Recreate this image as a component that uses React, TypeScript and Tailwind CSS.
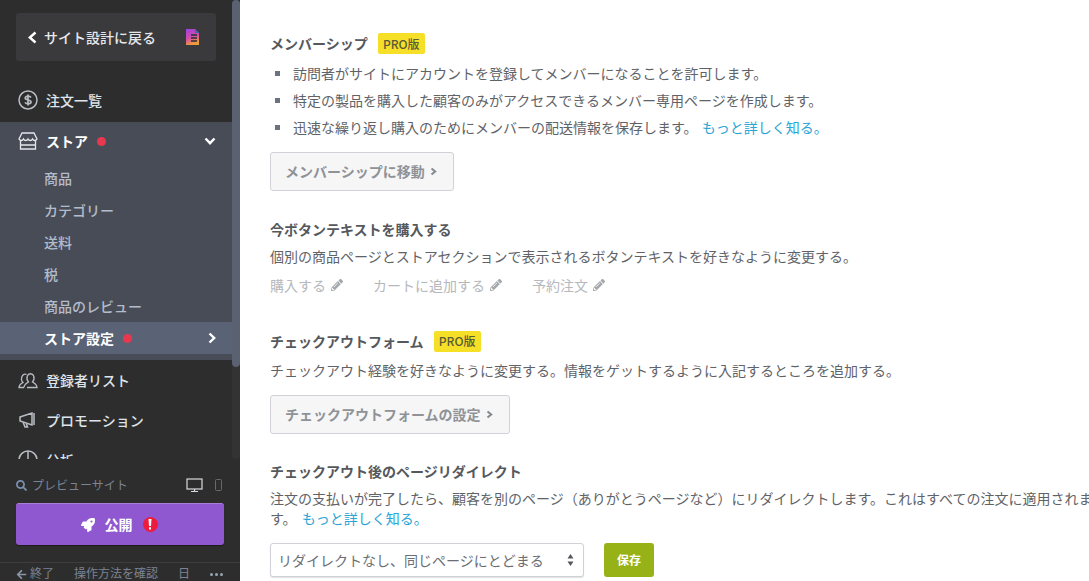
import React from "react";
import { FaPencilAlt, FaRocket, FaSearch, FaArrowLeft } from "react-icons/fa";

const font = { fontFamily: '"Noto Sans CJK JP", sans-serif' };

function Chevron({ dir, className, w, h, sw = 2.4, color = "#fff" }: { dir: "left" | "right" | "down"; className?: string; w: number; h: number; sw?: number; color?: string }) {
  const d =
    dir === "left"
      ? `M${w - 1.5} 1.5L1.8 ${h / 2}L${w - 1.5} ${h - 1.5}`
      : dir === "right"
        ? `M1.5 1.5L${w - 1.8} ${h / 2}L1.5 ${h - 1.5}`
        : `M1.5 1.5L${w / 2} ${h - 1.8}L${w - 1.5} 1.5`;
  return (
    <svg className={className} width={w} height={h} viewBox={`0 0 ${w} ${h}`} fill="none" stroke={color} strokeWidth={sw}>
      <path d={d} />
    </svg>
  );
}

function Dot() {
  return <span className="w-[9px] h-[9px] rounded-full bg-[#e8384f] inline-block ml-[9px]" />;
}

function NavRow({ icon, label }: { icon: React.ReactNode; label: string }) {
  return (
    <div className="h-10 flex items-center pl-[18px] pb-[2px] text-[14px] font-medium text-[#dfe3ea]">
      <span className="w-[20px] h-[20px] flex items-center justify-center text-[#c0c4cc]">{icon}</span>
      <span className="ml-2">{label}</span>
    </div>
  );
}

function SubItem({ label }: { label: string }) {
  return <div className="h-8 flex items-center pl-11 text-[14px] font-medium text-[#b4bccb]">{label}</div>;
}

function Pro() {
  return (
    <span className="ml-[10px] w-[47px] bg-[#f6e027] rounded-[2px] h-[21px] flex items-center justify-center text-[12px] font-medium text-[#5a5a3a]">
      PRO版
    </span>
  );
}

function GhostButton({ label, width }: { label: string; width: string }) {
  return (
    <button className={`${width} h-[39px] border border-[#cfd2d6] bg-[#f6f6f6] rounded-[3px] text-[14px] font-bold text-[#8f9296] flex items-center pl-[14px]`}>
      {label}
      <Chevron dir="right" w={7} h={9} sw={2} color="#85888c" className="ml-[5px]" />
    </button>
  );
}

function Bullet({ children }: { children: React.ReactNode }) {
  return (
    <li className="h-[27px] flex items-center">
      <span className="w-[5px] h-[5px] bg-[#6b7280] mr-[13px] ml-[5px] shrink-0" />
      <span>{children}</span>
    </li>
  );
}

function Edit({ label, width }: { label: string; width: string }) {
  return (
    <span className={`${width} flex items-center text-[#b5b8bc]`}>
      {label}
      <FaPencilAlt className="ml-[5px] w-[12px] h-[12px] text-[#a4a7ab]" />
    </span>
  );
}

export default function App() {
  return (
    <div className="w-[1089px] h-[581px] flex overflow-hidden bg-white" style={font}>
      <aside className="relative w-[240px] h-full shrink-0 bg-[#2d2d2d] flex flex-col overflow-hidden">
        <div className="h-[459px] shrink-0 overflow-hidden">
          <div className="pt-[13px] pl-4 pr-6">
            <div className="h-12 w-[200px] bg-[#3a3a3c] rounded-[3px] flex items-center pl-[12px] text-[14px] font-medium text-[#e6e8ec]">
              <Chevron dir="left" w={9} h={13} />
              <span className="ml-[7px]">サイト設計に戻る</span>
              <svg className="ml-[29px]" width="15" height="16" viewBox="0 0 15 16">
                <defs>
                  <linearGradient id="doc" x1="0" y1="0" x2="0.3" y2="1">
                    <stop offset="0" stopColor="#a13fe0" />
                    <stop offset="0.6" stopColor="#d14fa8" />
                    <stop offset="1" stopColor="#f09a3c" />
                  </linearGradient>
                </defs>
                <path d="M1 0h9l4 4v12H1z" fill="url(#doc)" />
                <path d="M10 0v4h4z" fill="#2f6fb0" />
                <path d="M6 6h6M6 9h6M6 12h6" stroke="#2d2d2d" strokeWidth="1.300" />
              </svg>
            </div>
          </div>
          <div className="mt-5">
            <NavRow
              label="注文一覧"
              icon={
                <svg width="20" height="20" viewBox="0 0 20 20" fill="none" stroke="#b9bdc4" strokeWidth="1.500">
                  <circle cx="10" cy="10" r="9" />
                  <path d="M13 7.500c-.6-1-1.600-1.300-3-1.300-1.600 0-2.800.7-2.800 1.900 0 2.600 5.800 1.200 5.800 3.800 0 1.200-1.200 1.900-3 1.900-1.400 0-2.500-.5-3.100-1.400M10 4.500v11" strokeWidth="1.700" />
                </svg>
              }
            />
          </div>
          <div className="bg-[#484c57] h-[238px] mt-[1px]">
            <div className="h-10 flex items-center pl-[18px] pr-[16px] pb-[2px] text-[14px] font-bold text-white">
              <svg width="20" height="18" viewBox="0 0 20 18" fill="none" stroke="#e4e6ea" strokeWidth="1.300">
                <path d="M4 1h12l3 6c-1 2-3.500 2-4.500 0-1 2-3.500 2-4.500 0-1 2-3.500 2-4.500 0-1 2-3.500 2-4.500 0zM2.500 9v8h15V9M2 13h16" />
              </svg>
              <span className="ml-2">ストア</span>
              <Dot />
              <Chevron dir="down" w={12} h={8} className="ml-auto mr-[8px]" />
            </div>
            <SubItem label="商品" />
            <SubItem label="カテゴリー" />
            <SubItem label="送料" />
            <SubItem label="税" />
            <SubItem label="商品のレビュー" />
            <div className="h-8 bg-[#5a6375] flex items-center pl-11 pr-[16px] text-[14px] font-bold text-white">
              <span>ストア設定</span>
              <Dot />
              <Chevron dir="right" w={8} h={12} className="ml-auto mr-[8px]" />
            </div>
          </div>
          <div className="mt-[1px]">
            <NavRow
              label="登録者リスト"
              icon={
                <svg width="20" height="18" viewBox="0 0 20 18" fill="none" stroke="#b9bdc4" strokeWidth="1.300">
                  <path d="M6 16.500H1c0-3 1.500-3.500 4-5-1.500-1.500-2-3.500-1-6 .8-2 3-2.800 4.500-2M9 16.500h10c0-3-2-4-4.500-5.500 1.500-1.500 2-3.500 1.200-6-1-3-5.400-3-6.400 0-.8 2.500-.3 4.500 1.200 6C8 12.500 6 13.500 6 16.500" />
                </svg>
              }
            />
            <NavRow
              label="プロモーション"
              icon={
                <svg width="20" height="18" viewBox="0 0 20 18" fill="none" stroke="#b9bdc4" strokeWidth="1.500">
                  <path d="M2 6l12-4v12L2 10zM16 2v12M5 11l2 5h2.500L8 12M2 6v4" />
                </svg>
              }
            />
            <NavRow
              label="分析"
              icon={
                <svg width="20" height="20" viewBox="0 0 20 20" fill="none" stroke="#b9bdc4" strokeWidth="1.500">
                  <circle cx="10" cy="10" r="9" />
                  <path d="M10 1v9H1" />
                </svg>
              }
            />
          </div>
        </div>

        <div className="px-4 pt-[14px]">
          <div className="flex items-center h-[24px] text-[12px] text-[#7b8494]">
            <FaSearch className="w-[11px] h-[11px] text-[#7b8fae]" />
            <span className="ml-[5px]">プレビューサイト</span>
            <svg className="ml-auto" width="17" height="15" viewBox="0 0 17 15" fill="none" stroke="#d8dade" strokeWidth="1.200">
              <rect x="1" y="1" width="15" height="10" />
              <path d="M8.500 11v2M5 13.500h7" />
            </svg>
            <svg className="ml-[12px] mr-[2px]" width="7" height="12" viewBox="0 0 7 12" fill="none" stroke="#666a70" strokeWidth="1">
              <rect x="0.500" y="0.500" width="6" height="11" rx="1" />
            </svg>
          </div>
          <button className="mt-[6px] w-[208px] h-[42px] rounded-[3px] bg-[#9058d0] border-t border-[#a77fd9] flex items-center justify-center pr-[2px] text-[14px] font-bold text-white shadow-[0_1px_1px_rgba(0,0,0,0.4)]">
            <FaRocket className="w-[14px] h-[14px]" />
            <span className="ml-[10px]">公開</span>
            <span className="ml-[10px] w-[15px] h-[15px] rounded-full bg-[#ee1c3c] flex items-center justify-center">
              <svg width="4" height="11" viewBox="0 0 4 11" fill="#fff">
                <path d="M.5 0h3L3 7H1zM1 8.200h2v2.300H1z" />
              </svg>
            </span>
          </button>
        </div>

        <div className="mt-auto h-[19px] border-t border-[#3d3d3d] pl-4 pr-[16px] flex items-start pt-[1px] text-[12px] text-[#7b8494] leading-[18px] whitespace-nowrap">
          <FaArrowLeft className="w-[11px] h-[11px] mt-[5px] text-[#8a94a6]" />
          <span className="ml-[3px]">終了</span>
          <span className="ml-5">操作方法を確認</span>
          <span className="ml-5">日</span>
          <span className="ml-auto flex gap-[2px] mt-[9px] pr-[1px]">
            <i className="w-[3px] h-[3px] rounded-full bg-[#9aa3b2]" />
            <i className="w-[3px] h-[3px] rounded-full bg-[#9aa3b2]" />
            <i className="w-[3px] h-[3px] rounded-full bg-[#9aa3b2]" />
          </span>
        </div>

        <div className="absolute top-0 right-0 w-2 h-[367px] rounded-[4px] bg-[#5a6272]" />
        <div className="absolute top-[367px] right-0 w-2 h-[92px] bg-[#333333] rounded-b-[4px]" />
      </aside>

      <main className="flex-1 min-w-0 overflow-hidden pl-[30px] text-[14px] text-[#5f6368] whitespace-nowrap">
        <div className="w-[830px]">
          <div className="pt-[33px] flex items-center h-[54px] font-bold text-[#55585c]">
            メンバーシップ
            <Pro />
          </div>
          <ul className="mt-[6px]">
            <Bullet>訪問者がサイトにアカウントを登録してメンバーになることを許可します。</Bullet>
            <Bullet>特定の製品を購入した顧客のみがアクセスできるメンバー専用ページを作成します。</Bullet>
            <Bullet>
              迅速な繰り返し購入のためにメンバーの配送情報を保存します。 <a className="ml-[1px] text-[#2aa5d5]">もっと詳しく知る。</a>
            </Bullet>
          </ul>
          <div className="mt-[11px]">
            <GhostButton label="メンバーシップに移動" width="w-[184px]" />
          </div>

          <h3 className="mt-[28px] h-5 leading-5 font-bold text-[#55585c]">今ボタンテキストを購入する</h3>
          <p className="mt-[7px] h-5 leading-5">個別の商品ページとストアセクションで表示されるボタンテキストを好きなように変更する。</p>
          <div className="mt-[9px] h-5 flex items-center">
            <Edit label="購入する" width="w-[103px]" />
            <Edit label="カートに追加する" width="w-[159px]" />
            <Edit label="予約注文" width="w-[100px]" />
          </div>

          <div className="mt-[35px] h-[22px] flex items-center font-bold text-[#55585c]">
            チェックアウトフォーム
            <Pro />
          </div>
          <p className="mt-[8px] h-5 leading-5">チェックアウト経験を好きなように変更する。情報をゲットするように入記するところを追加する。</p>
          <div className="mt-[15px]">
            <GhostButton label="チェックアウトフォームの設定" width="w-[240px]" />
          </div>

          <h3 className="mt-[27px] h-5 leading-5 font-bold text-[#55585c]">チェックアウト後のページリダイレクト</h3>
          <p className="mt-[7px] leading-5 whitespace-normal">
            注文の支払いが完了したら、顧客を別のページ（ありがとうページなど）にリダイレクトします。これはすべての注文に適用されます。 <a className="ml-[2px] text-[#2aa5d5]">もっと詳しく知る。</a>
          </p>
          <div className="mt-[15px] flex items-center">
            <div className="w-[314px] h-[34px] border border-[#cfd2d6] rounded-[3px] bg-white shadow-[0_1px_1px_rgba(0,0,0,0.12)] flex items-center pl-[7px] pr-[9px]">
              <span className="text-[#6a6e73]">リダイレクトなし、同じページにとどまる</span>
              <svg className="ml-auto" width="7" height="14" viewBox="0 0 7 14" fill="#55585c">
                <path d="M3.500 1L6.500 5.500H.5zM3.500 13L.5 8.500h6z" />
              </svg>
            </div>
            <button className="ml-5 w-[50px] h-[34px] rounded-[3px] bg-[#96b217] text-white text-[12px] font-bold">保存</button>
          </div>
        </div>
      </main>
    </div>
  );
}
